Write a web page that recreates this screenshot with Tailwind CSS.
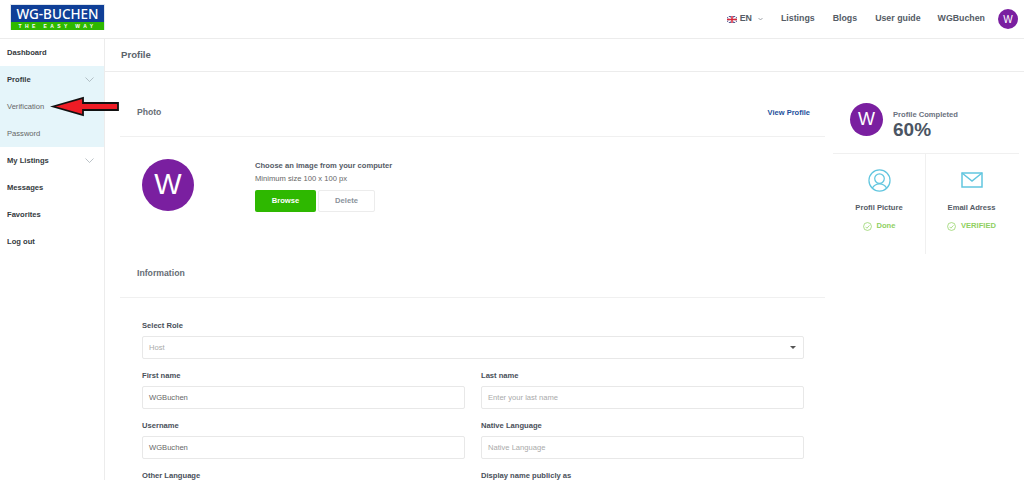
<!DOCTYPE html>
<html lang="en">
<head>
    <meta charset="UTF-8">
    <title>Profile</title>
    <script src="https://cdn.jsdelivr.net/npm/@tailwindcss/browser@4"></script>
</head>
<body class="bg-white font-['Liberation_Sans',Arial,sans-serif] text-[#4b5563] h-[480px] overflow-hidden relative">
    <!-- top bar -->
    <header class="h-[39px] border-b border-[#ececec] flex items-center justify-between pl-[10px] pr-[6px]">
        <div class="w-[95px] h-[26px] -mt-[5px] border border-[#dfe7ee] flex flex-col">
            <div class="h-[17px] bg-[#0f3f97] text-white text-[13.5px] leading-[18px] text-center font-['Noto_Sans',sans-serif] font-medium">WG-BUCHEN</div>
            <div class="h-[8px] bg-[#2eb800] text-white text-[5px] leading-[8px] text-center font-bold tracking-[3.4px]">THE EASY WAY</div>
        </div>
        <nav class="flex items-center text-[8.8px] font-bold text-[#555c66]">
            <svg class="w-[10px] h-[7px] mr-[3px]" viewBox="0 0 20 14">
                <rect width="20" height="14" fill="#27307a"/>
                <path d="M0 0L20 14M20 0L0 14" stroke="#fff" stroke-width="3"/>
                <path d="M10 0V14M0 7H20" stroke="#fff" stroke-width="5"/>
                <path d="M10 0V14M0 7H20" stroke="#d8283c" stroke-width="3"/>
            </svg>
            <span class="mr-[6px]">EN</span>
            <svg class="w-[5px] h-[4px] mr-[18px]" viewBox="0 0 10 6" fill="none" stroke="#7d838a" stroke-width="1.4"><path d="M1 1l4 4 4-4"/></svg>
            <span class="mr-[18px]">Listings</span>
            <span class="mr-[18px]">Blogs</span>
            <span class="mr-[17px]">User guide</span>
            <span class="mr-[13px]">WGBuchen</span>
            <div class="w-[20px] h-[20px] rounded-full bg-[#7a1fa0] text-white text-[10px] flex items-center justify-center font-normal">W</div>
        </nav>
    </header>

    <div class="flex">
        <!-- sidebar -->
        <aside class="w-[105px] h-[441px] shrink-0 border-r border-[#ececec] text-[7.6px] font-bold text-[#343a40]">
            <div class="h-[27px] flex items-center px-[7px]">Dashboard</div>
            <div class="bg-[#e5f5fa]">
                <div class="h-[27px] flex items-center justify-between pl-[7px] pr-[10px]">
                    Profile
                    <svg class="w-[9px] h-[5px]" viewBox="0 0 18 10" fill="none" stroke="#8f9ba2" stroke-width="1.2"><path d="M1 1l8 8 8-8"/></svg>
                </div>
                <div class="h-[27px] flex items-center px-[7px] font-normal text-[#666]">Verification</div>
                <div class="h-[27px] flex items-center px-[7px] font-normal text-[#666]">Password</div>
            </div>
            <div class="h-[27px] flex items-center justify-between pl-[7px] pr-[10px]">
                My Listings
                <svg class="w-[9px] h-[5px]" viewBox="0 0 18 10" fill="none" stroke="#8f9ba2" stroke-width="1.2"><path d="M1 1l8 8 8-8"/></svg>
            </div>
            <div class="h-[27px] flex items-center px-[7px]">Messages</div>
            <div class="h-[27px] flex items-center px-[7px]">Favorites</div>
            <div class="h-[27px] flex items-center px-[7px]">Log out</div>
        </aside>

        <main class="flex-1 min-w-0">
            <div class="h-[33px] border-b border-[#ececec] pl-[16px] flex items-center text-[9.6px] font-bold text-[#5b636b]">Profile</div>

            <div class="flex pl-[15px]">
                <!-- left column -->
                <div class="w-[705px] shrink-0">
                    <div class="h-[65px] border-b border-[#f0f0f0] flex items-center justify-between pl-[17px] pr-[15px] pt-[17px]">
                        <span class="text-[8.6px] font-bold text-[#666d75]">Photo</span>
                        <span class="text-[7.5px] font-bold text-[#1c4f9c]">View Profile</span>
                    </div>

                    <div class="flex pl-[22px] pt-[22px] h-[112px]">
                        <div class="w-[52px] h-[52px] rounded-full bg-[#7a1fa0] text-white text-[29px] flex items-center justify-center">W</div>
                        <div class="ml-[61px] pt-[1px]">
                            <p class="text-[7.6px] leading-[12px] font-bold text-[#555c66]">Choose an image from your computer</p>
                            <p class="text-[7.6px] leading-[12px] mt-[1px] text-[#666]">Minimum size 100 x 100 px</p>
                            <div class="flex gap-[2px] mt-[5px]">
                                <div class="w-[61px] h-[22px] rounded-[2px] bg-[#2eb800] text-white text-[7.6px] font-bold flex items-center justify-center">Browse</div>
                                <div class="w-[57px] h-[22px] rounded-[2px] border border-[#ececec] text-[#8a929b] text-[7.6px] font-bold flex items-center justify-center">Delete</div>
                            </div>
                        </div>
                    </div>

                    <div class="h-[49px] border-b border-[#f0f0f0] pl-[17px] pt-[18px] text-[8.7px] font-bold text-[#666d75]">Information</div>

                    <!-- form -->
                    <div class="pl-[22px] pr-[21px] pt-[23px] text-[7.6px]">
                        <label class="block font-bold leading-[10px] text-[#49505a]">Select Role</label>
                        <div class="h-[23px] mt-[5px] border border-[#e8e8e8] rounded-[2px] flex items-center justify-between pl-[6px] pr-[7px] text-[#aaa]">
                            Host
                            <div class="w-0 h-0 border-x-[3px] border-x-transparent border-t-[3px] border-t-[#555]"></div>
                        </div>
                        <div class="grid grid-cols-2 gap-x-[16px] mt-[12px]">
                            <div>
                                <label class="block font-bold leading-[10px] text-[#49505a]">First name</label>
                                <div class="h-[23px] mt-[5px] border border-[#e8e8e8] rounded-[2px] flex items-center pl-[6px] text-[#666]">WGBuchen</div>
                            </div>
                            <div>
                                <label class="block font-bold leading-[10px] text-[#49505a]">Last name</label>
                                <div class="h-[23px] mt-[5px] border border-[#e8e8e8] rounded-[2px] flex items-center pl-[6px] text-[#aaa]">Enter your last name</div>
                            </div>
                            <div class="mt-[12px]">
                                <label class="block font-bold leading-[10px] text-[#49505a]">Username</label>
                                <div class="h-[23px] mt-[5px] border border-[#e8e8e8] rounded-[2px] flex items-center pl-[6px] text-[#666]">WGBuchen</div>
                            </div>
                            <div class="mt-[12px]">
                                <label class="block font-bold leading-[10px] text-[#49505a]">Native Language</label>
                                <div class="h-[23px] mt-[5px] border border-[#e8e8e8] rounded-[2px] flex items-center pl-[6px] text-[#aaa]">Native Language</div>
                            </div>
                            <div class="mt-[12px]">
                                <label class="block font-bold leading-[10px] text-[#49505a]">Other Language</label>
                            </div>
                            <div class="mt-[12px]">
                                <label class="block font-bold leading-[10px] text-[#49505a]">Display name publicly as</label>
                            </div>
                        </div>
                    </div>
                </div>

                <!-- right column -->
                <div class="w-[186px] ml-[8px]">
                    <div class="h-[82px] border-b border-[#f0f0f0] flex items-start pl-[17px] pt-[31px]">
                        <div class="w-[33px] h-[33px] rounded-full bg-[#7a1fa0] text-white text-[18px] flex items-center justify-center">W</div>
                        <div class="ml-[10px] pt-[7px]">
                            <p class="text-[7.6px] leading-[10px] font-bold text-[#6b7280]">Profile Completed</p>
                            <p class="text-[19px] leading-[20px] font-bold text-[#4b5563]">60%</p>
                        </div>
                    </div>
                    <div class="grid grid-cols-2 h-[100px] text-[7.6px]">
                        <div class="border-r border-[#f0f0f0] flex flex-col items-center pt-[15px]">
                            <svg class="w-[23px] h-[23px]" viewBox="0 0 24 24" fill="none" stroke="#62c6df" stroke-width="1.3">
                                <circle cx="12" cy="12" r="11"/>
                                <circle cx="12" cy="10" r="5"/>
                                <path d="M4.500 20c2-3.500 4.500-4.500 7.500-4.500s5.500 1 7.500 4.500"/>
                            </svg>
                            <p class="font-bold text-[#555c66] mt-[11px] leading-[10px]">Profil Picture</p>
                            <p class="font-bold text-[#8fd05f] mt-[8px] leading-[10px] flex items-center gap-[5px]">
                                <svg class="w-[9px] h-[9px]" viewBox="0 0 16 16" fill="none" stroke="#8fd05f" stroke-width="1.300"><circle cx="8" cy="8" r="7"/><path d="M4.500 8.500l2.500 2.500 4.500-5"/></svg>
                                Done
                            </p>
                        </div>
                        <div class="flex flex-col items-center pt-[15px] pr-[2px]">
                            <svg class="w-[22px] h-[23px]" viewBox="0 0 22 23" fill="none" stroke="#62c6df" stroke-width="1.500">
                                <rect x="1" y="4" width="20" height="14"/>
                                <path d="M1 4l10 8 10-8"/>
                            </svg>
                            <p class="font-bold text-[#555c66] mt-[11px] leading-[10px]">Email Adress</p>
                            <p class="font-bold text-[#8fd05f] mt-[8px] leading-[10px] flex items-center gap-[5px]">
                                <svg class="w-[9px] h-[9px]" viewBox="0 0 16 16" fill="none" stroke="#8fd05f" stroke-width="1.300"><circle cx="8" cy="8" r="7"/><path d="M4.500 8.500l2.500 2.500 4.500-5"/></svg>
                                VERIFIED
                            </p>
                        </div>
                    </div>
                </div>
            </div>
        </main>
    </div>

    <!-- annotation arrow drawn over the sidebar -->
    <svg class="absolute left-[50px] top-[96px] w-[72px] h-[22px]" viewBox="0 0 72 22">
        <path d="M3 10.500L33 2V7H68V14H33V19Z" fill="#ee1c25" stroke="#111" stroke-width="1.800"/>
    </svg>
</body>
</html>
